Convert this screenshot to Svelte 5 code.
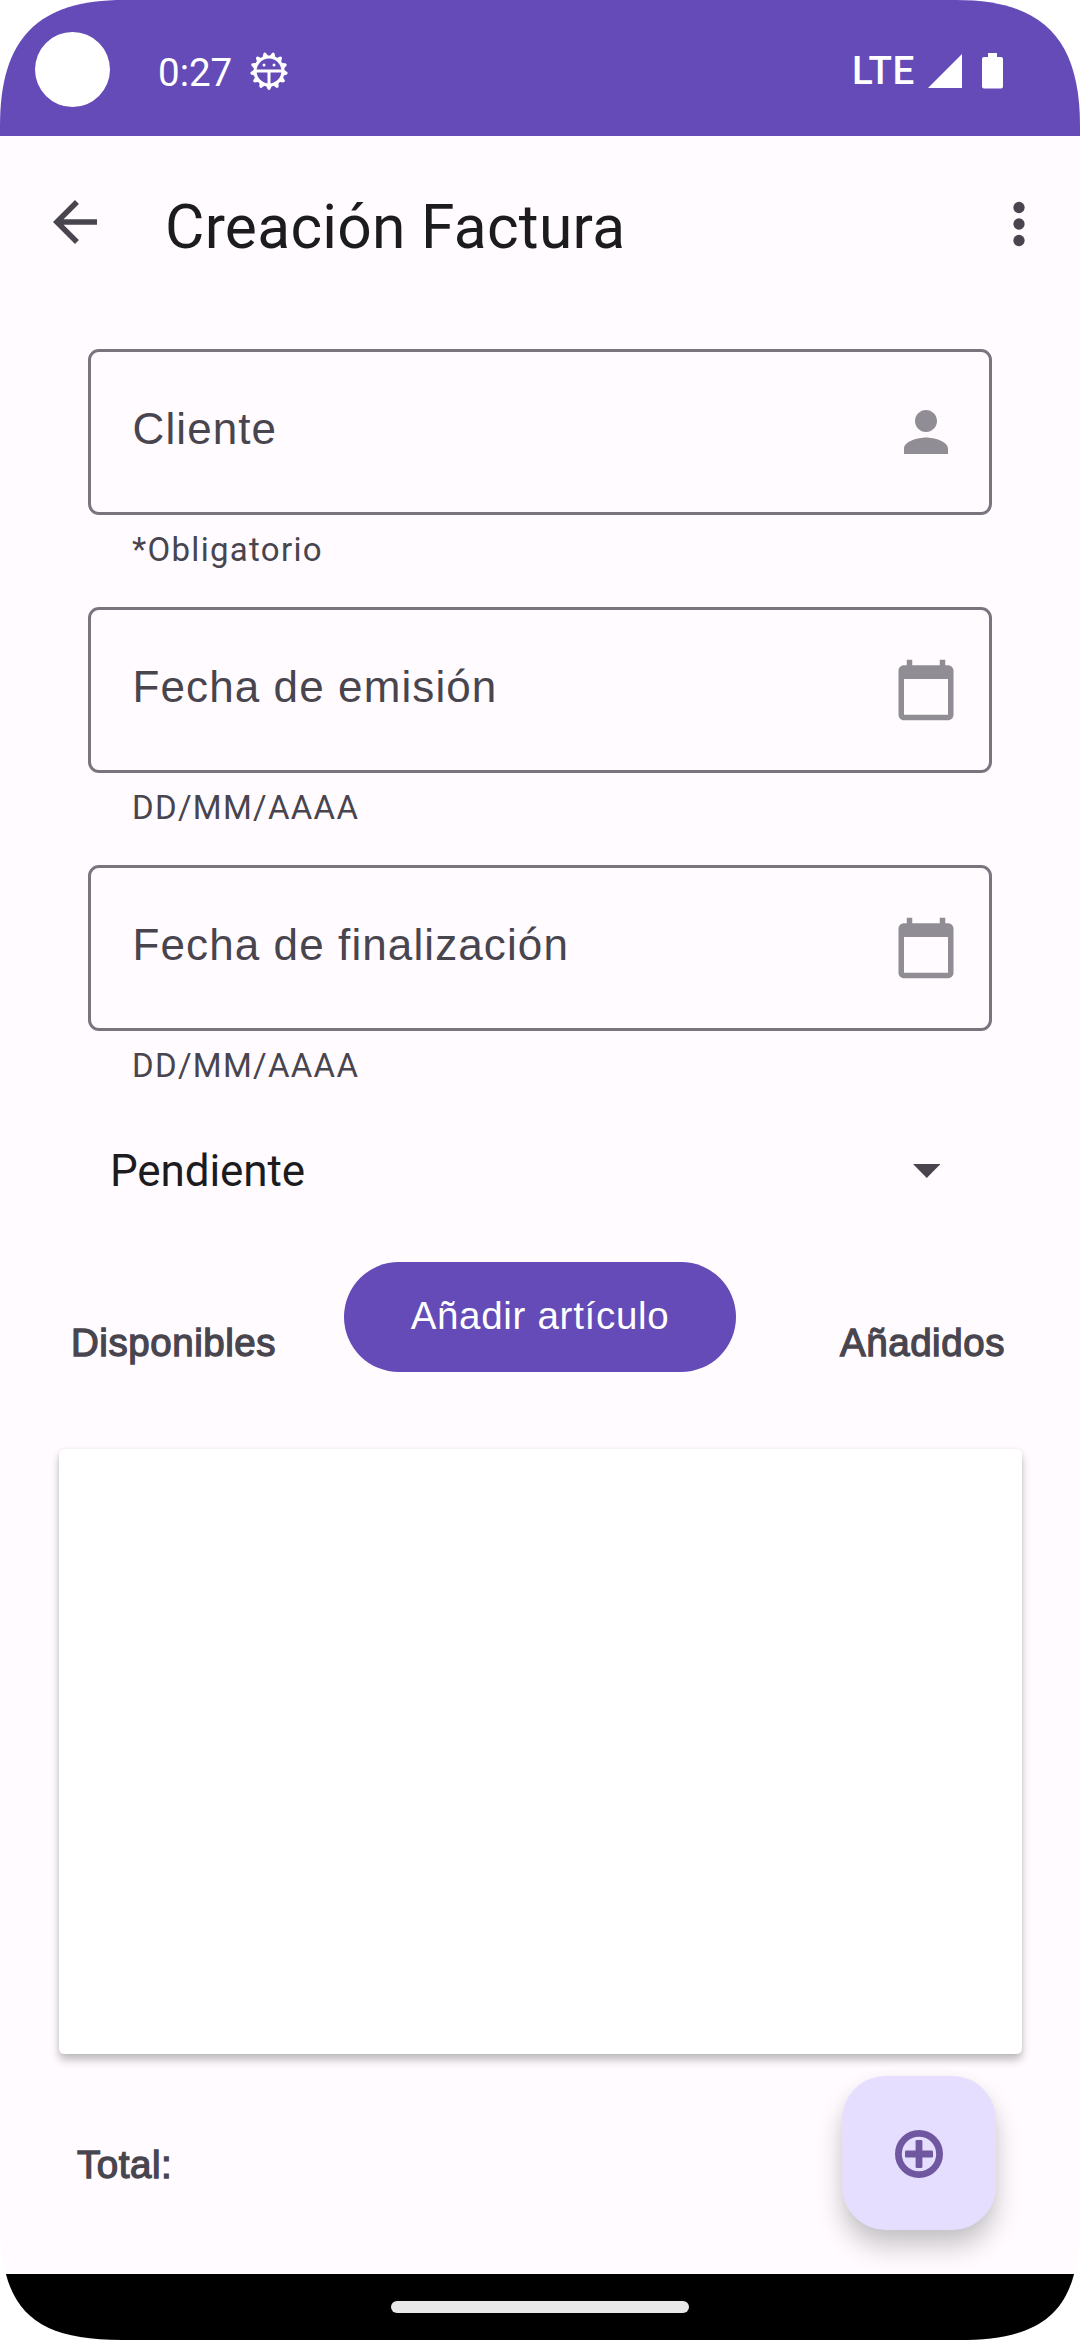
<script>
  const fields = [
    { label: 'Cliente', helper: '*Obligatorio', icon: 'person' },
    { label: 'Fecha de emisión', helper: 'DD/MM/AAAA', icon: 'calendar' },
    { label: 'Fecha de finalización', helper: 'DD/MM/AAAA', icon: 'calendar' }
  ];
  const toothCount = 13;
  const teeth = Array.from({ length: toothCount }, (_, i) => 180 + (i * 360) / toothCount);
  const icons = {
    person:
      'M12 12c2.21 0 4-1.79 4-4s-1.79-4-4-4-4 1.79-4 4 1.79 4 4 4zm0 2c-2.67 0-8 1.34-8 4v2h16v-2c0-2.66-5.33-4-8-4z',
    calendar:
      'M20 3h-1V1h-2v2H7V1H5v2H4c-1.1 0-2 .9-2 2v16c0 1.1.9 2 2 2h16c1.1 0 2-.9 2-2V5c0-1.1-.9-2-2-2zm0 18H4V8h16v13z'
  };
</script>

<div class="screen">
  <header class="status">
    <span class="camera"></span>
    <span class="time">0:27</span>
    <svg class="gear" viewBox="-20 -20 40 40">
      {#each teeth as angle}
        <path d="M-3 -14.500L-1.300 -18.200Q0 -19.600 1.300 -18.200L3 -14.500z" transform="rotate({angle})" fill="#fff" />
      {/each}
      <circle r="14" fill="none" stroke="#fff" stroke-width="3.2" />
      <path d="M-13 0H13M0 0V13" stroke="#fff" stroke-width="3" />
      <circle cx="-5" cy="-6" r="1.5" fill="#fff" />
      <circle cx="5" cy="-6" r="1.5" fill="#fff" />
    </svg>
    <span class="network">LTE</span>
    <svg class="signal" viewBox="0 0 34 34"><path d="M34 0V34H0z" fill="#fff" /></svg>
    <svg class="battery" viewBox="0 0 21 36">
      <path d="M6 0h9v4h4a2 2 0 0 1 2 2v27.500a2 2 0 0 1-2 2H2a2 2 0 0 1-2-2V6a2 2 0 0 1 2-2h4z" fill="#fff" />
    </svg>
  </header>

  <nav class="appbar">
    <svg class="back" viewBox="0 0 24 24"><path d="M20 11H7.83l5.59-5.59L12 4l-8 8 8 8 1.410-1.410L7.830 13H20z" fill="#48454e" /></svg>
    <h1>Creación Factura</h1>
    <svg class="more" viewBox="0 0 24 24">
      <g fill="#48454e"><circle cx="12" cy="6" r="2.050" /><circle cx="12" cy="12" r="2.050" /><circle cx="12" cy="18" r="2.050" /></g>
    </svg>
  </nav>

  <main>
    <form>
      {#each fields as field}
        <div class="field">
          <div class="box">
            <span class="label">{field.label}</span>
            <svg viewBox="0 0 24 24"><path d={icons[field.icon]} fill="#908d94" /></svg>
          </div>
          <span class="helper">{field.helper}</span>
        </div>
      {/each}
      <div class="select">
        <span>Pendiente</span>
        <svg viewBox="0 0 27.500 14"><path d="M0 0h27.500L13.750 14z" fill="#48454e" /></svg>
      </div>
    </form>

    <section class="actions">
      <span class="strong">Disponibles</span>
      <button>Añadir artículo</button>
      <span class="strong added">Añadidos</span>
    </section>

    <section class="card"></section>

    <footer>
      <span class="strong total">Total:</span>
      <button class="fab" aria-label="Guardar">
        <svg viewBox="-24 -24 48 48">
          <circle r="20.600" fill="none" stroke="#6f58a0" stroke-width="6.800" />
          <g fill="#6f58a0">
            <rect x="-14" y="-3.400" width="28" height="6.800" rx="1.200" />
            <rect x="-3.400" y="-14" width="6.800" height="28" rx="1.200" />
          </g>
        </svg>
      </button>
    </footer>
  </main>

  <div class="gesture"><span></span></div>
</div>

<style>
  :global(body) {
    margin: 0;
    background: #fff;
  }
  .screen {
    box-sizing: border-box;
    width: 1080px;
    height: 2340px;
    display: flex;
    flex-direction: column;
    overflow: hidden;
    background: #fffbff;
    color: #48454e;
    font-family: Roboto, sans-serif;
    clip-path: path('M0 126C0 38 38 0 124 0H956C1042 0 1080 38 1080 126V2219C1080 2309 1048 2340 958 2340H122C32 2340 0 2309 0 2219Z');
  }
  svg {
    display: block;
    flex: none;
  }
  .status {
    display: flex;
    align-items: flex-start;
    height: 136px;
    flex: none;
    background: #644bb8;
    color: #fff;
    font-size: 38.5px;
    line-height: 46px;
  }
  .camera {
    width: 75px;
    height: 75px;
    margin: 32px 0 0 35px;
    border-radius: 50%;
    background: #fff;
  }
  .time {
    width: 91px;
    margin: 50px 0 0 48px;
  }
  .gear {
    width: 40px;
    height: 40px;
    margin-top: 51px;
  }
  .network {
    margin: 48px 0 0 auto;
    width: 76px;
    font-weight: 500;
    letter-spacing: 0.5px;
  }
  .signal {
    width: 34px;
    height: 34px;
    margin-top: 54px;
  }
  .battery {
    width: 21px;
    height: 36px;
    margin: 53px 77px 0 20px;
  }
  .appbar {
    display: flex;
    align-items: flex-start;
    height: 213px;
    flex: none;
    padding: 0 28px 0 42px;
    box-sizing: border-box;
  }
  .back {
    width: 66px;
    height: 66px;
    margin-top: 53px;
  }
  h1 {
    margin: 56px auto 0 57px;
    font-size: 60.5px;
    line-height: 72px;
    font-weight: 400;
    letter-spacing: 0.27px;
    color: #1c1b1e;
  }
  .more {
    width: 66px;
    height: 66px;
    margin-top: 55px;
  }
  main {
    flex: 1;
    display: flex;
    flex-direction: column;
  }
  form {
    margin: 0 88px;
  }
  .field {
    height: 258px;
  }
  .box {
    box-sizing: border-box;
    height: 166px;
    border: 3px solid #79757f;
    border-radius: 11px;
    padding: 0 30px 0 41.5px;
    display: flex;
    align-items: center;
    justify-content: space-between;
  }
  .box svg {
    width: 66px;
    height: 66px;
  }
  .label {
    padding-bottom: 6px;
    font-family: 'Liberation Sans', sans-serif;
    font-size: 44px;
    letter-spacing: 1.1px;
  }
  .helper {
    display: block;
    margin: 15px 0 0 44px;
    font-size: 33px;
    line-height: 40px;
    letter-spacing: 1.3px;
  }
  .select {
    display: flex;
    align-items: center;
    justify-content: space-between;
    height: 95px;
    padding: 0 52px 0 22px;
    font-size: 44px;
    letter-spacing: -0.12px;
    color: #1c1b1e;
  }
  .select svg {
    width: 27.5px;
    height: 14px;
  }
  .actions {
    display: flex;
    align-items: flex-start;
    justify-content: space-between;
    height: 187px;
    padding: 44px 72px 0 71px;
  }
  .strong {
    width: 210px;
    margin-top: 58px;
    font-family: 'Liberation Sans', sans-serif;
    font-size: 38.5px;
    line-height: 46px;
    letter-spacing: 0.55px;
    white-space: nowrap;
    -webkit-text-stroke: 1.3px #48454e;
  }
  .added {
    width: 168px;
  }
  button {
    border: 0;
    padding: 0;
    font-family: 'Liberation Sans', sans-serif;
    font-size: 38.5px;
    color: #fff;
  }
  .actions button {
    width: 392px;
    height: 110px;
    margin-left: 63px;
    margin-right: auto;
    padding-bottom: 3px;
    border-radius: 55px;
    background: #644bb8;
    letter-spacing: 0.7px;
  }
  .added {
    margin-left: auto;
  }
  .card {
    height: 605px;
    margin: 0 58px 0 59px;
    border-radius: 5.5px;
    background: #fff;
    box-shadow: 0 6px 8px rgba(0, 0, 0, 0.25), 0 0 4px rgba(0, 0, 0, 0.06);
  }
  footer {
    display: flex;
    align-items: flex-start;
    justify-content: space-between;
    padding: 22px 84px 0 77px;
  }
  .total {
    margin-top: 66px;
  }
  .fab {
    display: flex;
    align-items: center;
    justify-content: center;
    width: 154px;
    height: 154px;
    border-radius: 44px;
    background: #e6deff;
    box-shadow: 0 17px 26px rgba(0, 0, 0, 0.21), 0 2px 14px rgba(0, 0, 0, 0.04);
  }
  .fab svg {
    width: 48px;
    height: 48px;
    margin-top: 1px;
  }
  .gesture {
    display: flex;
    justify-content: center;
    height: 39px;
    padding-top: 27px;
    background: #000;
  }
  .gesture span {
    width: 298px;
    height: 12px;
    border-radius: 6px;
    background: #e8e8e8;
  }
</style>
